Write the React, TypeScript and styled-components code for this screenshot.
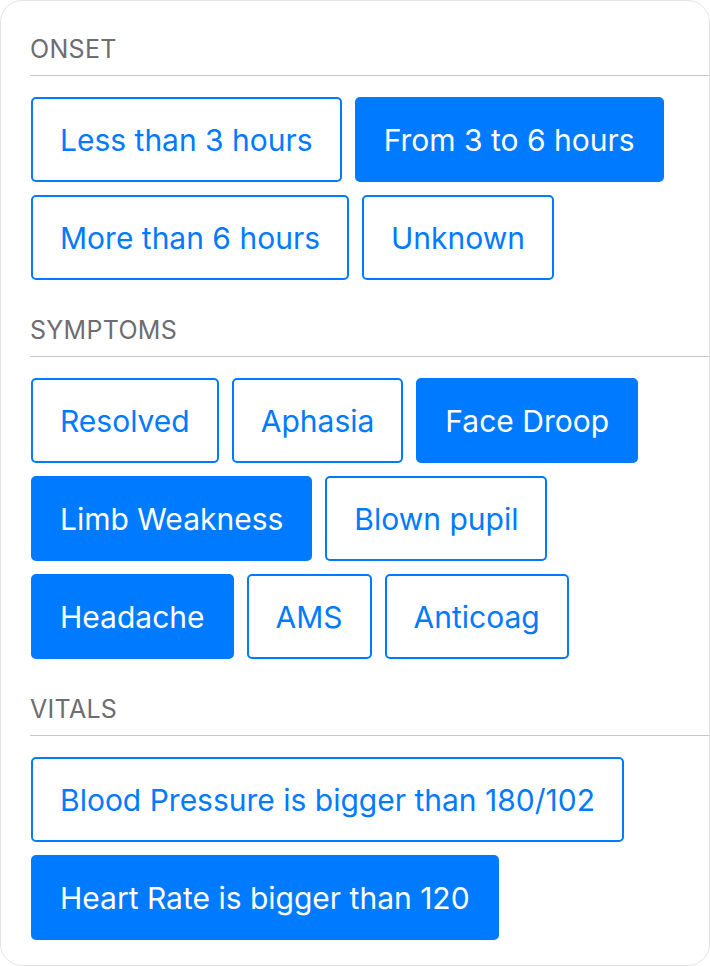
import React, { useState } from "react";
import styled, { createGlobalStyle } from "styled-components";

const Global = createGlobalStyle`
  html, body { margin: 0; padding: 0; background: #ffffff; }
  * { box-sizing: border-box; }
  body { font-family: Inter, "Noto Sans", "Liberation Sans", sans-serif; }
`;

const Card = styled.div`
  width: 710px;
  height: 966px;
  border: 1px solid #e3e3e3;
  border-radius: 22px;
  background: #ffffff;
  padding: 34px 0 0 29px;
  overflow: hidden;
`;

const Section = styled.section`
  & + & { margin-top: 36px; }
`;

const Header = styled.div`
  font-size: 25px;
  line-height: 28px;
  color: #6d6d72;
  letter-spacing: 0.3px;
  padding: 0 0 12px 0;
  border-bottom: 1px solid #c8c7cc;
`;

const Options = styled.div`
  display: flex;
  flex-wrap: wrap;
  gap: 13px;
  margin-top: 21px;
  padding-left: 1px;
`;

const Option = styled.button<{ $on: boolean }>`
  height: 85px;
  padding: 0 27px;
  border: 2px solid #007aff;
  border-radius: 5px;
  background: ${(p) => (p.$on ? "#007aff" : "#ffffff")};
  color: ${(p) => (p.$on ? "#ffffff" : "#007aff")};
  font-family: Inter, "Noto Sans", "Liberation Sans", sans-serif;
  font-size: 30px;
  font-weight: 400;
  line-height: 1;
  cursor: pointer;
  white-space: nowrap;
`;

type Group = { title: string; items: string[] };

const groups: Group[] = [
  { title: "ONSET", items: ["Less than 3 hours", "From 3 to 6 hours", "More than 6 hours", "Unknown"] },
  {
    title: "SYMPTOMS",
    items: ["Resolved", "Aphasia", "Face Droop", "Limb Weakness", "Blown pupil", "Headache", "AMS", "Anticoag"],
  },
  { title: "VITALS", items: ["Blood Pressure is bigger than 180/102", "Heart Rate is bigger than 120"] },
];

const initial: Record<string, boolean> = {
  "From 3 to 6 hours": true,
  "Face Droop": true,
  "Limb Weakness": true,
  Headache: true,
  "Heart Rate is bigger than 120": true,
};

export default function App() {
  const [sel, setSel] = useState<Record<string, boolean>>(initial);
  return (
    <>
      <Global />
      <Card>
        {groups.map((g) => (
          <Section key={g.title}>
            <Header>{g.title}</Header>
            <Options>
              {g.items.map((it) => (
                <Option key={it} $on={!!sel[it]} onClick={() => setSel((s) => ({ ...s, [it]: !s[it] }))}>
                  {it}
                </Option>
              ))}
            </Options>
          </Section>
        ))}
      </Card>
    </>
  );
}
